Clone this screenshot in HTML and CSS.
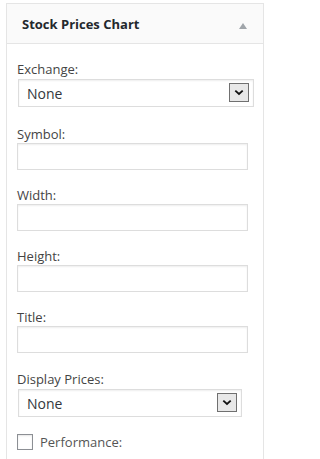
FILE: index.html
```html
<!DOCTYPE html>
<html lang="en">
<head>
<meta charset="utf-8">
<title>Stock Prices Chart widget</title>
<link rel="stylesheet" href="styles.css">
</head>
<body>
<div class="widget">
  <div class="widget-top">
    <h3 class="widget-title">Stock Prices Chart</h3>
    <svg class="toggle" width="8" height="6" viewBox="0 0 8 6" aria-hidden="true"><polygon points="4,0 8,6 0,6" fill="#a0a5aa"/></svg>
  </div>
  <form class="widget-inside">
    <div class="field field-select">
      <label for="exchange">Exchange:</label>
      <div class="select-wrap select-wide">
        <select id="exchange" class="select"><option>None</option></select>
        <span class="select-btn"><svg width="10" height="7" viewBox="0 0 10 7"><polyline points="1.3,1.6 5,5 8.7,1.6" fill="none" stroke="#111" stroke-width="1.8"/></svg></span>
      </div>
    </div>
    <div class="field field-text">
      <label for="symbol">Symbol:</label>
      <input id="symbol" class="text" type="text">
    </div>
    <div class="field field-text">
      <label for="width">Width:</label>
      <input id="width" class="text" type="text">
    </div>
    <div class="field field-text">
      <label for="height">Height:</label>
      <input id="height" class="text" type="text">
    </div>
    <div class="field field-text">
      <label for="title">Title:</label>
      <input id="title" class="text" type="text">
    </div>
    <div class="field field-select">
      <label for="display">Display Prices:</label>
      <div class="select-wrap select-narrow">
        <select id="display" class="select"><option>None</option></select>
        <span class="select-btn"><svg width="10" height="7" viewBox="0 0 10 7"><polyline points="1.3,1.6 5,5 8.7,1.6" fill="none" stroke="#111" stroke-width="1.8"/></svg></span>
      </div>
    </div>
    <div class="field field-check">
      <input id="performance" class="check" type="checkbox">
      <label for="performance">Performance:</label>
    </div>
  </form>
</div>
</body>
</html>
```
FILE: styles.css
```css
* { box-sizing: border-box; }

body {
  margin: 0;
  background: #fff;
  font-family: "Open Sans", "Noto Sans", sans-serif;
  color: #444;
}

.widget {
  width: 258px;
  margin: 3px 0 0 6px;
  border: 1px solid #e5e5e5;
  border-bottom: none;
  background: #fff;
}

.widget-top {
  height: 40px;
  background: #fafafa;
  border-bottom: 1px solid #e5e5e5;
  display: flex;
  align-items: center;
  justify-content: space-between;
  padding: 0 16px 0 15px;
}

.widget-title {
  margin: 0;
  font-size: 13px;
  line-height: 18px;
  font-weight: 700;
  color: #23282d;
}

.toggle {
  display: block;
  margin-top: 4px;
}

.widget-inside {
  margin: 0;
  padding: 16px 10px 20px 10px;
}

.field label {
  display: block;
  font-size: 13px;
  line-height: 18px;
  color: #444;
}

.field + .field { margin-top: 16px; }
.field-select + .field { margin-top: 18px; }
.field-text + .field-select { margin-top: 17px; }
.field-select + .field-check { margin-top: 16px; }

.text {
  display: block;
  width: 231px;
  height: 27px;
  margin: 0;
  padding: 2px 6px;
  border: 1px solid #ddd;
  border-radius: 0;
  background: #fff;
  box-shadow: inset 0 1px 2px rgba(0, 0, 0, 0.07);
  font: 14px "Open Sans", sans-serif;
  color: #32373c;
  outline: none;
}

.select-wrap {
  position: relative;
  margin: 1px 0 0 1px;
  height: 28px;
}

.select-wide { width: 236px; }
.select-narrow { width: 224px; }

.select {
  display: block;
  width: 100%;
  height: 28px;
  margin: 0;
  padding: 1px 30px 0 8px;
  border: 1px solid #ddd;
  border-radius: 0;
  background: #fff;
  box-shadow: inset 0 1px 2px rgba(0, 0, 0, 0.07);
  -webkit-appearance: none;
  appearance: none;
  font: 14px/25px "Open Sans", sans-serif;
  color: #32373c;
  outline: none;
}

.select-btn {
  position: absolute;
  top: 4px;
  right: 5px;
  width: 20px;
  height: 19px;
  border: 1px solid #707070;
  background: #e8e8e8;
  display: flex;
  align-items: center;
  justify-content: center;
  pointer-events: none;
}

.select-btn svg { display: block; }

.field-check {
  display: flex;
  align-items: center;
  gap: 7px;
}

.check {
  -webkit-appearance: none;
  appearance: none;
  width: 16px;
  height: 16px;
  margin: 0;
  border: 1px solid #8c8f94;
  border-radius: 0;
  background: #fff;
  box-shadow: inset 0 1px 2px rgba(0, 0, 0, 0.1);
}

.field-check label {
  display: inline;
  color: #555;
}
```
